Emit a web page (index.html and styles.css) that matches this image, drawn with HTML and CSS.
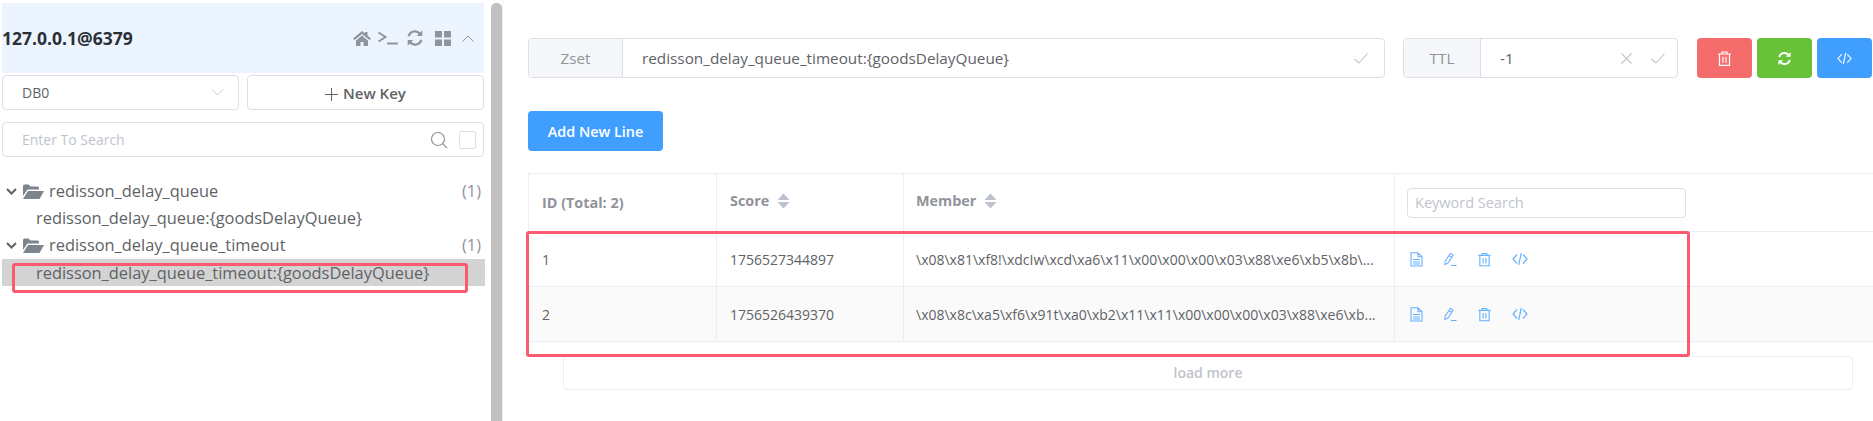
FILE: index.html
```html
<!DOCTYPE html>
<html lang="en">
<head>
  <meta charset="UTF-8">
  <title>Redis key view</title>
  <link rel="stylesheet" href="styles.css">
</head>
<body>
  <svg class="sprites" width="0" height="0">
    <symbol id="i-file" viewBox="0 0 13 15"><path d="M1 .8h7l4 4V14H1zM8 .8v4h4M3 7.500h7M3 10h7M3 12h7" fill="none" stroke="currentColor" stroke-width="1.100"/></symbol>
    <symbol id="i-edit" viewBox="0 0 14 15"><path d="M7 1l2.800 1.700L4.500 11l-3.500 2 .2-4zM5.500 3.500l2.800 1.700M7.500 14h6" fill="none" stroke="currentColor" stroke-width="1.100"/></symbol>
    <symbol id="i-trash" viewBox="0 0 14 15"><path d="M.5 3h13M4.500 3V1h5v2M2 3v11.300h10V3M5.500 5.800v6M8.500 5.800v6" fill="none" stroke="currentColor" stroke-width="1.200"/></symbol>
    <symbol id="i-code" viewBox="0 0 16 14"><path d="M5 2.500L1 7l4 4.500M11 2.500L15 7l-4 4.500M9.300 1L6.700 13" fill="none" stroke="currentColor" stroke-width="1.200"/></symbol>
    <symbol id="i-refresh" viewBox="0 0 16 16"><path d="M2.300 6.500A5.800 5.800 0 0 1 12.400 4.200M13.700 9.500A5.800 5.800 0 0 1 3.600 11.800" fill="none" stroke="currentColor" stroke-width="2"/><path d="M14.500 1.200v5h-5zM1.500 14.800v-5h5z" fill="currentColor"/></symbol>
    <symbol id="i-folder" viewBox="0 0 21 15"><path d="M0 2a1.500 1.500 0 0 1 1.500-1.500h4L7.500 2.500h7A1.500 1.500 0 0 1 16 4v1.500H4.500L0 12z" fill="currentColor"/><path d="M5 7h16l-4.500 8H0z" fill="currentColor"/></symbol>
    <symbol id="i-caret" viewBox="0 0 11 7"><path d="M1 1l4.500 4.500L10 1" fill="none" stroke="currentColor" stroke-width="2"/></symbol>
    <symbol id="i-sort" viewBox="0 0 13 16"><path d="M6.500 .5l6 6.500H.5zM6.500 15.500L.5 9h12z" fill="currentColor"/></symbol>
  </svg>

  <aside class="sidebar">
    <div class="conn-head">
      <span class="conn-name">127.0.0.1@6379</span>
      <div class="conn-icons">
        <svg class="ic-home" viewBox="0 0 18 15" preserveAspectRatio="none"><path d="M9 0L0 7.500 1.500 9 9 3l7.500 6L18 7.500l-3.500-3V1H12v1.500zM3 9.500V15h4.500v-4h3v4H15V9.500L9 4.500z" fill="currentColor"/></svg>
        <svg class="ic-term" viewBox="0 0 20 14" preserveAspectRatio="none"><path d="M.5 1.500l7 4.500-7 4.500" fill="none" stroke="currentColor" stroke-width="2"/><path d="M9 12.500h11" stroke="currentColor" stroke-width="2"/></svg>
        <svg class="ic-refresh"><use href="#i-refresh"/></svg>
        <svg class="ic-grid" viewBox="0 0 16 15" preserveAspectRatio="none"><path d="M0 0h7v6.500H0zM9 0h7v6.500H9zM0 8.500h7V15H0zM9 8.500h7V15H9z" fill="currentColor"/></svg>
        <svg class="ic-up" viewBox="0 0 12 7"><path d="M.5 6.500L6 1l5.500 5.500" fill="none" stroke="currentColor"/></svg>
      </div>
    </div>

    <div class="db-row">
      <div class="db-select">
        <span>DB0</span>
        <svg class="ic-down" viewBox="0 0 14 8"><path d="M.5 .5L7 7l6.500-6.500" fill="none" stroke="currentColor"/></svg>
      </div>
      <button class="new-key">
        <svg class="ic-plus" viewBox="0 0 13 13"><path d="M6.500 0v13M0 6.500h13" stroke="currentColor"/></svg>
        New Key
      </button>
    </div>

    <div class="search-box">
      <span class="search-ph">Enter To Search</span>
      <svg class="ic-search" viewBox="0 0 18 18"><circle cx="8" cy="8" r="6.500" fill="none" stroke="currentColor" stroke-width="1.200"/><path d="M12.800 12.800L17 17" stroke="currentColor" stroke-width="1.200"/></svg>
      <span class="check"></span>
    </div>

    <ul class="tree">
      <li class="folder">
        <svg class="caret"><use href="#i-caret"/></svg>
        <svg class="folder-ic"><use href="#i-folder"/></svg>
        <span class="folder-name">redisson_delay_queue</span>
        <span class="count">(1)</span>
      </li>
      <li class="leaf">redisson_delay_queue:{goodsDelayQueue}</li>
      <li class="folder">
        <svg class="caret"><use href="#i-caret"/></svg>
        <svg class="folder-ic"><use href="#i-folder"/></svg>
        <span class="folder-name">redisson_delay_queue_timeout</span>
        <span class="count">(1)</span>
      </li>
      <li class="leaf selected">redisson_delay_queue_timeout:{goodsDelayQueue}</li>
    </ul>
    <div class="mark mark-key"></div>
    <div class="scrollbar"></div>
  </aside>

  <main class="main">
    <div class="key-bar">
      <div class="field field-key">
        <span class="field-tag tag-key">Zset</span>
        <span class="field-val">redisson_delay_queue_timeout:{goodsDelayQueue}</span>
        <svg class="ic-ok" viewBox="0 0 14 11"><path d="M.5 6l4.500 4L13.500 .5" fill="none" stroke="currentColor" stroke-width="1.100"/></svg>
      </div>
      <div class="field field-ttl">
        <span class="field-tag tag-ttl">TTL</span>
        <span class="field-val">-1</span>
        <svg class="ic-x" viewBox="0 0 11 11"><path d="M.5 .5l10 10M10.500 .5l-10 10" fill="none" stroke="currentColor" stroke-width="1.100"/></svg>
        <svg class="ic-ok" viewBox="0 0 14 11"><path d="M.5 6l4.500 4L13.500 .5" fill="none" stroke="currentColor" stroke-width="1.100"/></svg>
      </div>
      <div class="actions">
        <button class="act red"><svg class="ic-act"><use href="#i-trash"/></svg></button>
        <button class="act green"><svg class="ic-act"><use href="#i-refresh"/></svg></button>
        <button class="act blue"><svg class="ic-act"><use href="#i-code"/></svg></button>
      </div>
    </div>

    <button class="add-line">Add New Line</button>

    <div class="table">
      <div class="row head">
        <div class="cell c-id">ID (Total: 2)</div>
        <div class="cell c-score"><span class="sort-label">Score</span> <svg class="sort"><use href="#i-sort"/></svg></div>
        <div class="cell c-member"><span class="sort-label">Member</span> <svg class="sort"><use href="#i-sort"/></svg></div>
        <div class="cell c-ops"><span class="kw-search">Keyword Search</span></div>
      </div>
      <div class="row">
        <div class="cell c-id">1</div>
        <div class="cell c-score">1756527344897</div>
        <div class="cell c-member">\x08\x81\xf8!\xdcIw\xcd\xa6\x11\x00\x00\x00\x03\x88\xe6\xb5\x8b\...</div>
        <div class="cell c-ops">
          <svg class="op op-file"><use href="#i-file"/></svg>
          <svg class="op op-edit"><use href="#i-edit"/></svg>
          <svg class="op op-trash"><use href="#i-trash"/></svg>
          <svg class="op op-code"><use href="#i-code"/></svg>
        </div>
      </div>
      <div class="row alt">
        <div class="cell c-id">2</div>
        <div class="cell c-score">1756526439370</div>
        <div class="cell c-member">\x08\x8c\xa5\xf6\x91t\xa0\xb2\x11\x11\x00\x00\x00\x03\x88\xe6\xb...</div>
        <div class="cell c-ops">
          <svg class="op op-file"><use href="#i-file"/></svg>
          <svg class="op op-edit"><use href="#i-edit"/></svg>
          <svg class="op op-trash"><use href="#i-trash"/></svg>
          <svg class="op op-code"><use href="#i-code"/></svg>
        </div>
      </div>
    </div>

    <div class="load-more">load more</div>
    <div class="mark mark-rows"></div>
  </main>
</body>
</html>
```

FILE: styles.css
```css
* {
  box-sizing: border-box;
}

html, body {
  height: 100%;
}

body {
  margin: 0;
  display: flex;
  overflow: hidden;
  background-color: #fff;
  color: #606266;
  font-family: "Open Sans", "Noto Sans", sans-serif;
  font-size: 14px;
}

.sprites {
  position: absolute;
}

button {
  font-family: inherit;
}

/* left column */
.sidebar {
  position: relative;
  flex: 0 0 503px;
  height: 421px;
  padding: 3px 18px 0 2px;
  border-right: 1px solid #f0f0f3;
}

.scrollbar {
  position: absolute;
  top: 3px;
  left: 491px;
  width: 11px;
  height: 418px;
  background-color: #c1c1c1;
  border-radius: 5px 5px 0 0;
}

.conn-head {
  height: 70px;
  display: flex;
  align-items: center;
  justify-content: space-between;
  background-color: #ecf5ff;
}

.conn-name {
  font-size: 17.500px;
  font-weight: 700;
  color: #2b2f36;
}

.conn-icons {
  display: flex;
  align-items: center;
  padding: 0 10px 0 0;
  color: #909399;
}

.ic-home { width: 18px; height: 15px; margin-right: 7px; }
.ic-term { width: 20px; height: 14px; margin-right: 8px; }
.ic-refresh { width: 18px; height: 18px; margin-right: 11px; }
.ic-grid { width: 16px; height: 15px; margin-right: 11px; }
.ic-up { width: 12px; height: 7px; }

.db-row {
  display: flex;
  gap: 8px;
  margin-top: 2px;
}

.db-select, .new-key, .search-box, .field {
  border: 1px solid #dcdfe6;
  border-radius: 4px;
  background-color: #fff;
}

.db-select {
  flex: 0 0 237px;
  height: 35px;
  padding: 0 14px 0 19px;
  display: flex;
  align-items: center;
  justify-content: space-between;
  font-size: 14px;
}

.ic-down {
  width: 13px;
  height: 7px;
  color: #c0c4cc;
}

.new-key {
  flex: 1;
  height: 35px;
  padding: 0;
  color: #606266;
  font-size: 15px;
  font-weight: 600;
}

.ic-plus {
  width: 13px;
  height: 13px;
  margin-right: 1px;
  vertical-align: -2px;
}

.search-box {
  height: 35px;
  margin-top: 12px;
  padding: 0 7px 0 19px;
  display: flex;
  align-items: center;
}

.search-ph {
  flex: 1;
  color: #c0c4cc;
  font-size: 14px;
}

.ic-search {
  width: 18px;
  height: 18px;
  color: #909399;
  margin-right: 11px;
}

.check {
  width: 17px;
  height: 18px;
  border: 1px solid #dcdfe6;
  border-radius: 2px;
}

.tree {
  list-style: none;
  margin: 21px -1px 0 0;
  padding: 0;
  font-size: 16.400px;
  color: #606266;
}

.folder {
  height: 27px;
  display: flex;
  align-items: center;
  padding: 0 4px 0 4px;
}

.caret {
  width: 11px;
  height: 7px;
  color: #606266;
  margin-right: 6px;
}

.folder-ic {
  width: 21px;
  height: 15px;
  color: #7d848c;
  margin-right: 5px;
}

.folder-name, .count {
  padding-bottom: 2px;
}

.folder-name {
  flex: 1;
}

.count {
  color: #909399;
}

.leaf {
  height: 27px;
  line-height: 25px;
  padding-left: 34px;
}

.leaf.selected {
  line-height: 27px;
  background-color: #d3d3d3;
}

.mark {
  position: absolute;
  border: 3px solid #fc5a6e;
  border-radius: 3px;
  pointer-events: none;
}

.mark-key {
  top: 263px;
  left: 12px;
  width: 456px;
  height: 30px;
}

/* right column */
.main {
  position: relative;
  flex: 1;
  min-width: 0;
  padding: 38px 0 0 25px;
}

.key-bar {
  display: flex;
  width: 1345px;
}

.field {
  height: 40px;
  display: flex;
  align-items: center;
  overflow: hidden;
  font-size: 15.300px;
}

.field-key {
  flex: 0 0 857px;
  margin-right: 18px;
}

.field-ttl {
  flex: 0 0 275px;
  margin-right: 19px;
}

.field-tag {
  height: 100%;
  display: flex;
  align-items: center;
  justify-content: center;
  background-color: #f5f7fa;
  border-right: 1px solid #dcdfe6;
  color: #909399;
}

.tag-key { flex: 0 0 94px; }
.tag-ttl { flex: 0 0 77px; }

.field-val {
  flex: 1;
  padding-left: 19px;
}

.ic-ok {
  width: 14px;
  height: 11px;
  color: #c0c4cc;
  margin-right: 12px;
}

.field-key .ic-ok {
  margin-right: 16px;
}

.ic-x {
  width: 11px;
  height: 11px;
  color: #c0c4cc;
  margin-right: 19px;
}

.actions {
  display: flex;
  gap: 5px;
}

.act {
  width: 55px;
  height: 40px;
  padding: 0;
  border: none;
  border-radius: 4px;
  color: #fff;
  display: flex;
  align-items: center;
  justify-content: center;
}

.act.red { background-color: #f56c6c; }
.act.green { background-color: #67c23a; }
.act.blue { background-color: #409eff; }

.ic-act {
  width: 15px;
  height: 15px;
}

.add-line {
  display: block;
  width: 135px;
  height: 40px;
  margin-top: 33px;
  padding: 0;
  border: none;
  border-radius: 4px;
  background-color: #409eff;
  color: #fff;
  font-size: 14.400px;
  font-weight: 600;
}

.table {
  margin-top: 22px;
  width: 1345px;
  border-top: 1px solid #ebeef5;
  border-left: 1px solid #ebeef5;
  font-size: 14px;
}

.row {
  display: flex;
  height: 55px;
  border-bottom: 1px solid #ebeef5;
}

.row.head {
  height: 58px;
  color: #909399;
  font-weight: 700;
  font-size: 14.400px;
}

.row.alt {
  background-color: #fafafa;
}

.cell {
  display: flex;
  align-items: center;
  padding-left: 13px;
  border-right: 1px solid #ebeef5;
  min-width: 0;
  white-space: nowrap;
}

.c-id { flex: 0 0 188px; }
.c-score { flex: 0 0 187px; }
.c-member { flex: 0 0 491px; padding-left: 12px; }
.c-ops { flex: 1; border-right: none; padding-left: 15px; }

.sort-label {
  margin-bottom: 4px;
}

.sort {
  width: 13px;
  height: 16px;
  margin-left: 8px;
  margin-bottom: 4px;
  color: #bcc2d0;
}

.head .c-ops {
  padding-left: 12px;
}

.kw-search {
  display: flex;
  align-items: center;
  width: 279px;
  height: 30px;
  padding-left: 7px;
  border: 1px solid #dcdfe6;
  border-radius: 4px;
  color: #c0c4cc;
  font-size: 14.500px;
  font-weight: 400;
}

.op {
  color: #66b1ff;
  margin-right: 21px;
  width: 13px;
  height: 15px;
}

.op-code { width: 16px; height: 14px; }

.load-more {
  display: flex;
  align-items: center;
  justify-content: center;
  width: 1290px;
  height: 34px;
  margin: 14px 0 0 35px;
  padding-bottom: 2px;
  border: 1px solid #ebeef5;
  border-radius: 4px;
  color: #c0c4cc;
  font-size: 14px;
  font-weight: 600;
}

.mark-rows {
  position: absolute;
  top: 231px;
  left: 23px;
  width: 1164px;
  height: 126px;
}
```
